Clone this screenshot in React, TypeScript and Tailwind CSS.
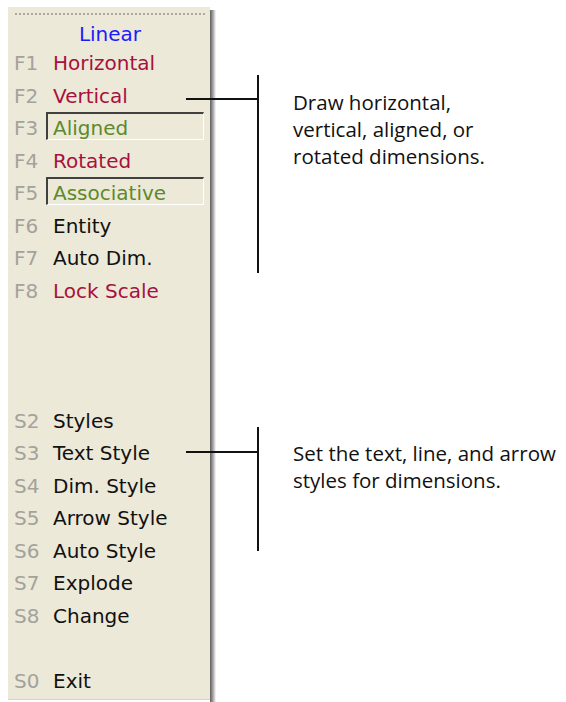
import React from 'react';

type Row = { key?: string; label?: string; tone?: 'red' | 'green' | 'black'; boxed?: boolean };

const rows: Row[] = [
  { key: 'F1', label: 'Horizontal', tone: 'red' },
  { key: 'F2', label: 'Vertical', tone: 'red' },
  { key: 'F3', label: 'Aligned', tone: 'green', boxed: true },
  { key: 'F4', label: 'Rotated', tone: 'red' },
  { key: 'F5', label: 'Associative', tone: 'green', boxed: true },
  { key: 'F6', label: 'Entity', tone: 'black' },
  { key: 'F7', label: 'Auto Dim.', tone: 'black' },
  { key: 'F8', label: 'Lock Scale', tone: 'red' },
  {},
  {},
  {},
  { key: 'S2', label: 'Styles', tone: 'black' },
  { key: 'S3', label: 'Text Style', tone: 'black' },
  { key: 'S4', label: 'Dim. Style', tone: 'black' },
  { key: 'S5', label: 'Arrow Style', tone: 'black' },
  { key: 'S6', label: 'Auto Style', tone: 'black' },
  { key: 'S7', label: 'Explode', tone: 'black' },
  { key: 'S8', label: 'Change', tone: 'black' },
  {},
  { key: 'S0', label: 'Exit', tone: 'black' },
];

const toneClass = {
  red: 'text-[#a8103f]',
  green: 'text-[#5c8a2c]',
  black: 'text-[#111111]',
};

function MenuRow({ row }: { row: Row }) {
  return (
    <div className="flex h-[32.5px] pl-[6px] pr-[6px]">
      <span className="w-[32px] leading-[32.5px] text-[#a3a29c]">{row.key}</span>
      <div
        className={`flex-1 h-[28px] border-t-2 border-l-2 border-b border-r pl-[5px] ${
          row.boxed ? 'border-t-[#404040] border-l-[#404040] border-b-white border-r-white' : 'border-transparent'
        }`}
      >
        <span className={`block leading-[29px] ${row.tone ? toneClass[row.tone] : ''}`}>{row.label}</span>
      </div>
    </div>
  );
}

function Callout({ height, hookTop, textTop, lines }: { height: number; hookTop: number; textTop: number; lines: string[] }) {
  return (
    <div className="flex" style={{ height }}>
      <div className="relative w-[44px] h-full">
        <div className="absolute right-[1px] top-0 bottom-0 w-[2px] bg-[#111]" />
        <div className="absolute left-[-30px] right-[1px] h-[2px] bg-[#111]" style={{ top: hookTop }} />
      </div>
      <div
        className="ml-[33px] text-[20.5px] leading-[27px] text-[#111] font-['Open_Sans',sans-serif]"
        style={{ marginTop: textTop }}
      >
        {lines.map((l) => (
          <div key={l} className="whitespace-nowrap">{l}</div>
        ))}
      </div>
    </div>
  );
}

export default function App() {
  return (
    <div className="flex w-[566px] h-[702px] bg-white overflow-hidden">
      <div className="flex ml-[8px] mt-[7px] h-[693px]">
        <div className="w-[202px] h-full bg-[#ECE9D8] font-['DejaVu_Sans',sans-serif] text-[20px] border-b border-[#d8d5c4]">
          <div className="mt-[6px] ml-[7px] mr-[5px] h-[2px] bg-[repeating-linear-gradient(90deg,#a9a8a2_0_2px,transparent_2px_4px)]" />
          <div className="h-[32px] pt-[6px] text-center text-[#1a1aff] leading-[26px] pl-[2px]">Linear</div>
          {rows.map((r, i) => (
            <MenuRow key={i} row={r} />
          ))}
        </div>
        <div className="w-[6px] h-full mt-[3px] bg-linear-to-r from-[#5e5e5e] via-[#a5a5a5] to-white" />
      </div>
      <div className="flex flex-col">
        <div className="mt-[75px]">
          <Callout
            height={198}
            hookTop={23}
            textTop={14}
            lines={['Draw horizontal,', 'vertical, aligned, or', 'rotated dimensions.']}
          />
        </div>
        <div className="mt-[154px]">
          <Callout
            height={124}
            hookTop={24}
            textTop={13}
            lines={['Set the text, line, and arrow', 'styles for dimensions.']}
          />
        </div>
      </div>
    </div>
  );
}
